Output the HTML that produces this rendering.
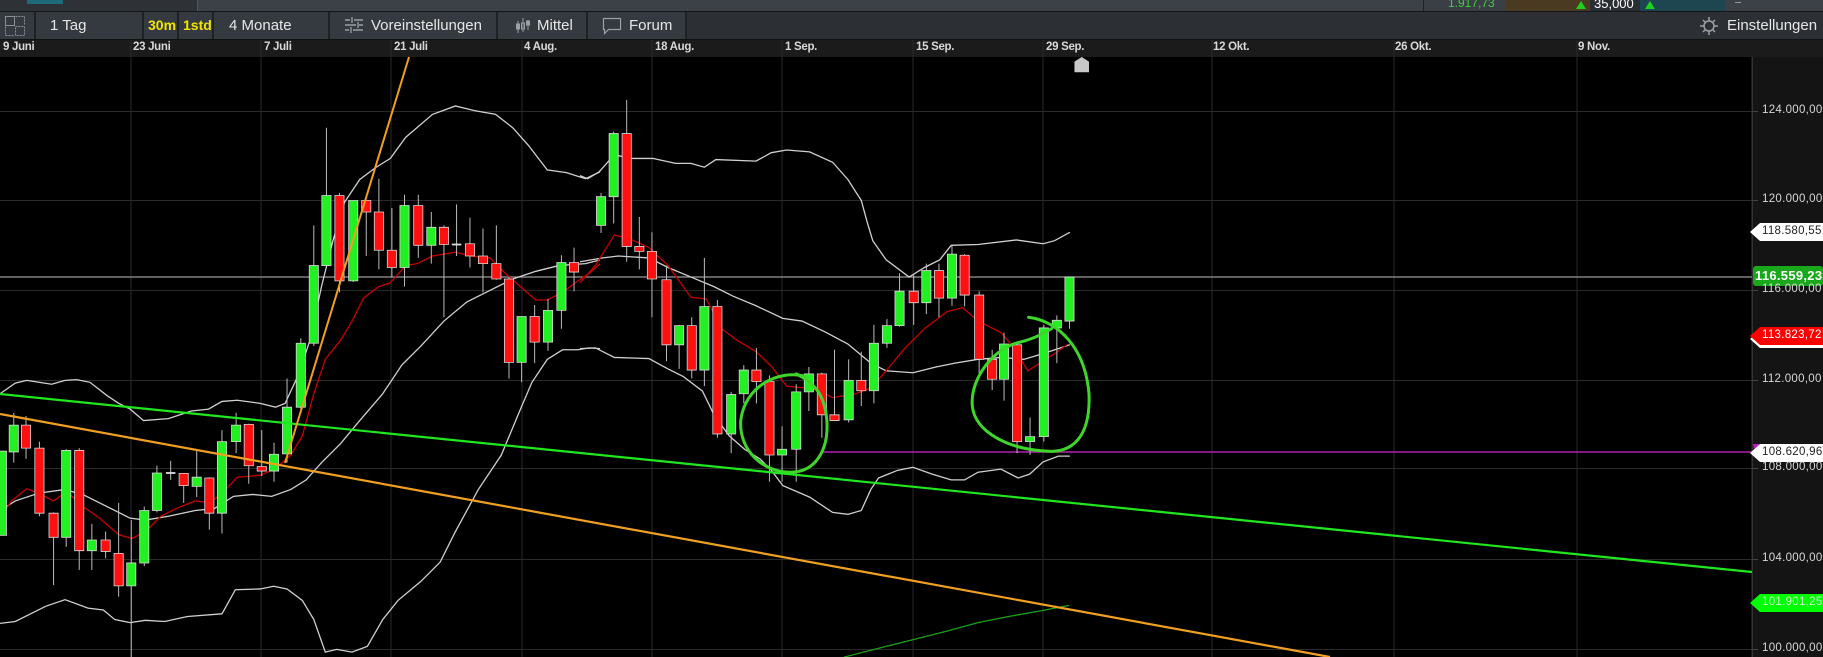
<!DOCTYPE html>
<html><head><meta charset="utf-8"><style>
*{margin:0;padding:0;box-sizing:border-box}
body{width:1823px;height:657px;overflow:hidden;background:#000;font-family:"Liberation Sans",sans-serif;position:relative}
.a{position:absolute}
.tb{color:#e6e6e6;font-size:15px;top:12px;height:27px;line-height:27px;background:#353a40;border-right:2px solid #1e2125}
.d{position:absolute;top:41px;font-size:11.5px;font-weight:bold;color:#d8d8d8;letter-spacing:-0.3px}
.p{position:absolute;left:1762px;font-size:11.5px;color:#d8d8d8;letter-spacing:0.3px}
</style></head><body>
<!-- top bar -->
<div class="a" style="left:0;top:0;width:1823px;height:11px;background:#3c4147"></div>
<div class="a" style="left:0;top:0;width:198px;height:11px;background:#2e3237;border-right:1px solid #555"></div>
<div class="a" style="left:27px;top:0;width:36px;height:4px;background:#1d6a7a"></div>
<div class="a" style="left:1423px;top:0;width:82px;height:11px;background:#3a3f45;border-left:1px solid #222;color:#3fd03f;font-size:12px;line-height:6px;padding-left:24px;overflow:hidden">1.917,73</div>
<div class="a" style="left:1505px;top:0;width:85px;height:11px;background:#4a3a22"></div>
<div class="a" style="left:1576px;top:1px;width:0;height:0;border-left:5px solid transparent;border-right:5px solid transparent;border-bottom:8px solid #1fd01f"></div>
<div class="a" style="left:1590px;top:0;width:50px;height:11px;background:#2a2e33;color:#fff;font-size:13px;line-height:8px;padding-left:4px;overflow:hidden">35,000</div>
<div class="a" style="left:1640px;top:0;width:85px;height:11px;background:#1d4650"></div>
<div class="a" style="left:1645px;top:1px;width:0;height:0;border-left:5px solid transparent;border-right:5px solid transparent;border-bottom:8px solid #1fd01f"></div>
<div class="a" style="left:1735px;top:2px;width:6px;height:1px;background:#999"></div>
<div class="a" style="left:0;top:11px;width:1823px;height:1px;background:#15181b"></div>
<!-- toolbar -->
<div class="a" style="left:0;top:12px;width:1823px;height:27px;background:#2c3035"></div>
<div class="a tb" style="left:0;width:36px"></div>
<svg class="a" style="left:4px;top:15px" width="22" height="22"><g fill="none" stroke="#8a8f95" stroke-width="1"><rect x="1.5" y="1.5" width="9" height="9"/><path d="M11.5 1.5h9v9M1.5 11.5v9h9M11.5 11.5h9v9h-9z" stroke-dasharray="2 1"/></g></svg>
<div class="a tb" style="left:36px;width:108px;padding-left:14px">1 Tag</div>
<div class="a tb" style="left:144px;width:35px;color:#f2e400;font-weight:bold;font-size:14px;padding-left:4px">30m</div>
<div class="a tb" style="left:179px;width:35px;color:#f2e400;font-weight:bold;font-size:14px;padding-left:4px">1std</div>
<div class="a tb" style="left:214px;width:116px;padding-left:15px">4 Monate</div>
<div class="a tb" style="left:330px;width:168px;padding-left:41px">Voreinstellungen</div>
<svg class="a" style="left:344px;top:17px" width="20" height="17"><g stroke="#9aa0a6" stroke-width="1.5"><path d="M1 3h5M10 3h9M1 8h11M15 8h4M1 13h4M9 13h10"/><path d="M8 0v6M14 5v6M7 10v6" stroke-width="1.3"/></g></svg>
<div class="a tb" style="left:498px;width:90px;padding-left:39px">Mittel</div>
<svg class="a" style="left:515px;top:16px" width="16" height="20"><g stroke="#9aa0a6" fill="none" stroke-width="1"><path d="M3 5v12M8 2v14M13 4v10"/><rect x="1.5" y="8" width="3" height="5" fill="#9aa0a6"/><rect x="6.5" y="7" width="3" height="6"/><rect x="11.5" y="5" width="3" height="4" fill="#9aa0a6"/></g></svg>
<div class="a tb" style="left:588px;width:99px;padding-left:41px">Forum</div>
<svg class="a" style="left:602px;top:17px" width="20" height="19"><path d="M1.5 1.5h17v11h-12l-4 4v-4h-1z" fill="none" stroke="#9aa0a6" stroke-width="1.2"/></svg>
<div class="a" style="left:1727px;top:12px;height:27px;line-height:27px;color:#e6e6e6;font-size:15px">Einstellungen</div>
<svg class="a" style="left:1700px;top:17px" width="18" height="18"><g fill="none" stroke="#9aa0a6" stroke-width="1.5"><circle cx="9" cy="9" r="5"/><path d="M9 0v4M9 14v4M0 9h4M14 9h4M3 3l2 2M13 13l2 2M15 3l-2 2M3 15l2-2"/></g></svg>
<div class="a" style="left:0;top:39px;width:1823px;height:1px;background:#111"></div>
<!-- date bar -->
<div class="a" style="left:0;top:40px;width:1823px;height:17px;background:#1b1b1b"></div>
<div class="d" style="left:3px">9 Juni</div><div class="d" style="left:133px">23 Juni</div><div class="d" style="left:264px">7 Juli</div><div class="d" style="left:394px">21 Juli</div><div class="d" style="left:524px">4 Aug.</div><div class="d" style="left:655px">18 Aug.</div><div class="d" style="left:785px">1 Sep.</div><div class="d" style="left:916px">15 Sep.</div><div class="d" style="left:1046px">29 Sep.</div><div class="d" style="left:1213px">12 Okt.</div><div class="d" style="left:1395px">26 Okt.</div><div class="d" style="left:1578px">9 Nov.</div>
<!-- price axis bg -->
<div class="a" style="left:1752px;top:57px;width:71px;height:600px;background:#141414;border-left:1px solid #333"></div>

<svg class="a" style="left:0;top:0" width="1823" height="657">
<g stroke="#2a2a2a" stroke-width="1">
<path d="M131 40V657M261 40V657M391 40V657M522 40V657M652 40V657M782 40V657M913 40V657M1043 40V657M1212 40V657M1394 40V657M1577 40V657"/>
<path d="M0 111.5H1758M0 200.5H1758M0 290.5H1758M0 380.5H1758M0 468.5H1758M0 559.5H1758M0 649.5H1758"/>
</g>
<path d="M1752 57V657" stroke="#333"/>
<!-- current price line -->
<path d="M0 277H1752" stroke="#9a9a9a" stroke-width="1.2"/>
<path d="M823 452H1752" stroke="#b020b0" stroke-width="1.5"/>

<!-- zoom7 group -->
<g transform="translate(0,57) scale(0.3827)">
<g fill="none" stroke="#d0d0d0" stroke-width="1.3" vector-effect="non-scaling-stroke">
<polyline vector-effect="non-scaling-stroke" points="0,880 40,852 70,845 135,855 170,845 200,843 235,850 280,885 310,905 340,920 375,950 440,945 500,925 545,920 580,900 620,897 680,905 720,915 745,905 780,830 810,740 840,600 870,480 900,380 940,320 980,290 1020,265 1060,210 1130,150 1190,128 1240,140 1295,150 1340,185 1380,230 1430,295 1480,302 1530,318 1568,300"/>
<polyline vector-effect="non-scaling-stroke" points="0,1185 40,1160 100,1140 170,1130 220,1145 290,1180 340,1205 380,1210 440,1200 510,1185 560,1180 610,1148 660,1143 710,1148 760,1130 800,1105 840,1060 890,1010 940,950 1000,880 1050,805 1100,755 1160,690 1220,640 1280,610 1340,580 1400,560 1460,545 1530,540 1568,530"/>
<polyline vector-effect="non-scaling-stroke" points="0,1480 40,1475 80,1455 120,1435 170,1418 230,1440 270,1445 300,1470 340,1478 380,1472 430,1475 490,1462 580,1455 615,1392 680,1390 715,1383 750,1390 790,1420 820,1470 850,1555 880,1548 920,1555 960,1540 1000,1470 1040,1420 1100,1370 1150,1320 1190,1240 1250,1130 1310,1040 1360,920 1390,850 1430,790 1470,765 1510,765 1540,760 1568,762"/>
</g>
<polyline fill="none" stroke="#c80000" stroke-width="1.3" vector-effect="non-scaling-stroke" points="0,1205 30,1160 70,1128 100,1140 140,1160 175,1135 210,1170 260,1205 310,1248 345,1258 380,1240 420,1200 460,1180 510,1160 550,1165 590,1130 620,1098 680,1093 720,1075 760,1040 790,990 820,880 850,790 890,740 920,690 950,630 990,600 1020,590 1060,545 1090,540 1130,520 1190,510 1230,520 1280,525 1320,565 1360,600 1400,635 1430,635 1470,615 1510,585 1540,565 1568,540"/>
<path fill="none" stroke="#bbb" stroke-width="1" vector-effect="non-scaling-stroke" d="M5 1030V1250M36 930V1060M68 938V1050M103 1005V1200M140 1190V1380M173 1025V1280M207 1022V1340M240 1220V1340M276 1240V1310M310 1165V1410M343 1210V1568M377 1175V1330M410 1068V1190M446 1055V1105M480 1088V1165M514 1030V1150M547 1098V1235M580 975V1245M617 930V1035M650 958V1115M684 975V1095M716 1008V1110M750 840V1060M786 735V920M820 440V755M853 185V545M887 355V615M923 375V588M957 375V520M990 318V555M1024 395V575M1057 360V600M1093 360V525M1127 405V540M1160 440V680M1193 385V520M1228 420V550M1262 448V615M1297 440V582M1330 575V840M1363 678V850M1397 648V800M1432 632V768M1467 518V710M1500 498V612"/>
<g stroke="#d8d8d8" stroke-width="0.8" vector-effect="non-scaling-stroke">
<g fill="#22f022">
<rect x="-7" y="1030" width="24" height="220" vector-effect="non-scaling-stroke"/><rect x="24" y="962" width="24" height="70" vector-effect="non-scaling-stroke"/><rect x="161" y="1028" width="24" height="227" vector-effect="non-scaling-stroke"/><rect x="228" y="1262" width="24" height="28" vector-effect="non-scaling-stroke"/><rect x="331" y="1322" width="24" height="60" vector-effect="non-scaling-stroke"/><rect x="365" y="1185" width="24" height="137" vector-effect="non-scaling-stroke"/><rect x="398" y="1087" width="24" height="98" vector-effect="non-scaling-stroke"/><rect x="502" y="1098" width="24" height="24" vector-effect="non-scaling-stroke"/><rect x="568" y="1005" width="24" height="187" vector-effect="non-scaling-stroke"/><rect x="605" y="962" width="24" height="43" vector-effect="non-scaling-stroke"/><rect x="704" y="1038" width="24" height="44" vector-effect="non-scaling-stroke"/><rect x="738" y="915" width="24" height="122" vector-effect="non-scaling-stroke"/><rect x="774" y="748" width="24" height="167" vector-effect="non-scaling-stroke"/><rect x="808" y="545" width="24" height="203" vector-effect="non-scaling-stroke"/><rect x="841" y="362" width="24" height="183" vector-effect="non-scaling-stroke"/><rect x="911" y="375" width="24" height="210" vector-effect="non-scaling-stroke"/><rect x="1045" y="388" width="24" height="162" vector-effect="non-scaling-stroke"/><rect x="1115" y="445" width="24" height="47" vector-effect="non-scaling-stroke"/><rect x="1351" y="678" width="24" height="120" vector-effect="non-scaling-stroke"/><rect x="1420" y="662" width="24" height="83" vector-effect="non-scaling-stroke"/><rect x="1455" y="537" width="24" height="125" vector-effect="non-scaling-stroke"/>
</g>
<g fill="#ff1010">
<rect x="56" y="962" width="24" height="60" vector-effect="non-scaling-stroke"/><rect x="91" y="1022" width="24" height="170" vector-effect="non-scaling-stroke"/><rect x="128" y="1192" width="24" height="63" vector-effect="non-scaling-stroke"/><rect x="195" y="1028" width="24" height="262" vector-effect="non-scaling-stroke"/><rect x="264" y="1262" width="24" height="30" vector-effect="non-scaling-stroke"/><rect x="298" y="1297" width="24" height="85" vector-effect="non-scaling-stroke"/><rect x="468" y="1088" width="24" height="32" vector-effect="non-scaling-stroke"/><rect x="535" y="1100" width="24" height="92" vector-effect="non-scaling-stroke"/><rect x="638" y="960" width="24" height="108" vector-effect="non-scaling-stroke"/><rect x="672" y="1070" width="24" height="12" vector-effect="non-scaling-stroke"/><rect x="875" y="362" width="24" height="223" vector-effect="non-scaling-stroke"/><rect x="945" y="375" width="24" height="30" vector-effect="non-scaling-stroke"/><rect x="978" y="405" width="24" height="100" vector-effect="non-scaling-stroke"/><rect x="1012" y="505" width="24" height="45" vector-effect="non-scaling-stroke"/><rect x="1081" y="388" width="24" height="104" vector-effect="non-scaling-stroke"/><rect x="1148" y="445" width="24" height="45" vector-effect="non-scaling-stroke"/><rect x="1216" y="488" width="24" height="32" vector-effect="non-scaling-stroke"/><rect x="1250" y="520" width="24" height="20" vector-effect="non-scaling-stroke"/><rect x="1285" y="540" width="24" height="40" vector-effect="non-scaling-stroke"/><rect x="1318" y="580" width="24" height="218" vector-effect="non-scaling-stroke"/><rect x="1385" y="678" width="24" height="67" vector-effect="non-scaling-stroke"/><rect x="1488" y="537" width="24" height="25" vector-effect="non-scaling-stroke"/>
</g>
<g fill="#ddd"><rect x="434" y="1085" width="24" height="4"/><rect x="1181" y="488" width="24" height="4"/></g>
</g>
</g>

<!-- zoom8 group -->
<g transform="translate(580,57) scale(0.3827)">
<g fill="none" stroke="#d0d0d0" stroke-width="1.3">
<polyline vector-effect="non-scaling-stroke" points="0,310 20,318 50,300 90,255 130,265 190,265 250,278 290,278 325,288 355,268 460,272 500,250 540,243 600,248 660,275 700,320 735,375 750,430 765,480 800,530 860,575 900,550 940,530 970,492 1040,490 1140,478 1210,488 1240,480 1280,458"/>
<polyline vector-effect="non-scaling-stroke" points="0,535 60,525 100,520 180,525 230,550 290,575 350,600 400,625 460,650 530,683 580,690 640,718 700,750 760,800 800,820 870,825 930,810 980,800 1040,790 1100,785 1160,790 1210,775 1280,752"/>
<polyline vector-effect="non-scaling-stroke" points="0,762 40,760 90,785 180,788 230,815 270,835 320,873 350,935 390,990 430,1025 470,1050 500,1080 530,1120 600,1150 660,1190 700,1195 735,1185 760,1130 780,1100 830,1080 870,1072 920,1090 970,1105 1005,1105 1040,1085 1100,1077 1145,1100 1175,1090 1210,1058 1250,1043 1280,1043"/>
</g>
<polyline fill="none" stroke="#c80000" stroke-width="1.3" vector-effect="non-scaling-stroke" points="0,590 40,545 90,465 130,475 180,498 230,545 290,628 330,632 370,710 410,740 460,770 500,808 540,860 590,865 620,870 660,890 720,880 760,865 800,820 850,760 900,710 960,665 1000,655 1040,690 1100,720 1130,755 1170,820 1210,795 1240,775 1275,750"/>
<polyline fill="none" stroke="#1aa01a" stroke-width="1.3" vector-effect="non-scaling-stroke" points="690,1568 800,1540 880,1520 960,1500 1040,1478 1120,1462 1200,1448 1278,1433"/>
<path fill="none" stroke="#bbb" stroke-width="1" vector-effect="non-scaling-stroke" d="M55 355V460M88 195V435M122 112V535M155 418V555M188 458V680M226 545V795M259 700V815M292 680V840M325 525V860M359 635V995M395 875V1035M428 805V905M461 760V905M495 832V1110M528 965V1110M565 855V1110M598 810V925M632 825V995M665 765V950M702 790V955M735 770V912M768 700V905M802 685V760M835 565V705M872 570V700M905 540V672M938 540V680M972 492V650M1005 515V652M1043 612V835M1077 765V870M1108 720V898M1142 752V1035M1176 942V1040M1212 700V1005M1246 675V800M1279 575V710"/>
<g stroke="#d8d8d8" stroke-width="0.8">
<g fill="#22f022">
<rect x="43" y="365" width="24" height="75" vector-effect="non-scaling-stroke"/><rect x="76" y="200" width="24" height="165" vector-effect="non-scaling-stroke"/><rect x="247" y="702" width="24" height="50" vector-effect="non-scaling-stroke"/><rect x="313" y="652" width="24" height="166" vector-effect="non-scaling-stroke"/><rect x="383" y="882" width="24" height="103" vector-effect="non-scaling-stroke"/><rect x="416" y="818" width="24" height="62" vector-effect="non-scaling-stroke"/><rect x="516" y="1025" width="24" height="15" vector-effect="non-scaling-stroke"/><rect x="553" y="875" width="24" height="150" vector-effect="non-scaling-stroke"/><rect x="586" y="828" width="24" height="47" vector-effect="non-scaling-stroke"/><rect x="690" y="845" width="24" height="103" vector-effect="non-scaling-stroke"/><rect x="756" y="748" width="24" height="124" vector-effect="non-scaling-stroke"/><rect x="790" y="702" width="24" height="46" vector-effect="non-scaling-stroke"/><rect x="823" y="612" width="24" height="90" vector-effect="non-scaling-stroke"/><rect x="893" y="558" width="24" height="84" vector-effect="non-scaling-stroke"/><rect x="960" y="515" width="24" height="115" vector-effect="non-scaling-stroke"/><rect x="1096" y="750" width="24" height="92" vector-effect="non-scaling-stroke"/><rect x="1164" y="992" width="24" height="13" vector-effect="non-scaling-stroke"/><rect x="1200" y="708" width="24" height="284" vector-effect="non-scaling-stroke"/><rect x="1234" y="688" width="24" height="20" vector-effect="non-scaling-stroke"/><rect x="1267" y="575" width="24" height="115" vector-effect="non-scaling-stroke"/>
</g>
<g fill="#ff1010">
<rect x="110" y="200" width="24" height="295" vector-effect="non-scaling-stroke"/><rect x="143" y="495" width="24" height="13" vector-effect="non-scaling-stroke"/><rect x="176" y="508" width="24" height="72" vector-effect="non-scaling-stroke"/><rect x="214" y="582" width="24" height="170" vector-effect="non-scaling-stroke"/><rect x="280" y="702" width="24" height="116" vector-effect="non-scaling-stroke"/><rect x="347" y="652" width="24" height="333" vector-effect="non-scaling-stroke"/><rect x="449" y="818" width="24" height="30" vector-effect="non-scaling-stroke"/><rect x="483" y="848" width="24" height="192" vector-effect="non-scaling-stroke"/><rect x="620" y="828" width="24" height="107" vector-effect="non-scaling-stroke"/><rect x="653" y="935" width="24" height="15" vector-effect="non-scaling-stroke"/><rect x="723" y="845" width="24" height="27" vector-effect="non-scaling-stroke"/><rect x="860" y="612" width="24" height="30" vector-effect="non-scaling-stroke"/><rect x="926" y="558" width="24" height="72" vector-effect="non-scaling-stroke"/><rect x="993" y="518" width="24" height="104" vector-effect="non-scaling-stroke"/><rect x="1031" y="622" width="24" height="168" vector-effect="non-scaling-stroke"/><rect x="1065" y="790" width="24" height="52" vector-effect="non-scaling-stroke"/><rect x="1130" y="752" width="24" height="253" vector-effect="non-scaling-stroke"/>
</g>
</g>
<!-- hand drawn circles -->
<g fill="none" stroke="#3ed62a" stroke-width="3" vector-effect="non-scaling-stroke" stroke-linecap="round">
<path vector-effect="non-scaling-stroke" d="M590 835 C520 815 430 860 420 950 C415 1030 480 1085 550 1085 C620 1085 650 1020 645 950 C640 890 620 855 565 828"/>
<path vector-effect="non-scaling-stroke" d="M1172 680 C1250 690 1320 760 1330 880 C1335 1000 1280 1035 1220 1030 C1120 1025 1030 980 1025 910 C1020 840 1080 760 1150 745 C1190 735 1215 720 1232 710"/>
</g>
<!-- 29 Sep marker -->
<path d="M1292 12 L1311 0 L1330 12 V40 H1292Z" fill="#c8c8c8"/>
</g>

<!-- trend lines -->
<path d="M0 394 L1752 572" stroke="#1fe81f" stroke-width="2.2"/>
<path d="M0 414 L1330 657" stroke="#f0a020" stroke-width="2.2"/>
<path d="M285 463 L409 57" stroke="#f0a020" stroke-width="2"/>

<!-- axis ticks -->
<g stroke="#444"><path d="M1752 111.5h6M1752 200.5h6M1752 290.5h6M1752 380.5h6M1752 468.5h6M1752 559.5h6M1752 649.5h6"/></g>
<!-- labels -->
<path d="M1750 232 L1760 223 H1823 V241 H1760Z" fill="#fff"/>
<rect x="1753" y="266" width="70" height="20" rx="3" fill="#19a819"/>
<path d="M1750 339 L1760 330 H1823 V348 H1760Z" fill="#fff"/>
<path d="M1750 336 L1760 327 H1823 V345 H1760Z" fill="#ff0000"/>
<path d="M1750 453 L1760 444 H1823 V462 H1760Z" fill="#fff"/>
<path d="M1753 444 L1760 444 L1754 449Z" fill="#c020c0"/>
<path d="M1750 603 L1760 594 H1823 V612 H1760Z" fill="#00ff00"/>
</svg>
<div class="p" style="top:104px">124.000,00</div>
<div class="p" style="top:193px">120.000,00</div>
<div class="p" style="top:283px">116.000,00</div>
<div class="p" style="top:373px">112.000,00</div>
<div class="p" style="top:461px">108.000,00</div>
<div class="p" style="top:552px">104.000,00</div>
<div class="p" style="top:642px">100.000,00</div>
<div class="p" style="top:225px;color:#222">118.580,55</div>
<div class="p" style="top:268px;left:1755px;color:#fff;font-weight:bold;font-size:13px">116.559,23</div>
<div class="p" style="top:329px;color:#fff">113.823,72</div>
<div class="p" style="top:446px;color:#222">108.620,96</div>
<div class="p" style="top:596px;color:#d0ffd0">101.901,25</div>
</body></html>
